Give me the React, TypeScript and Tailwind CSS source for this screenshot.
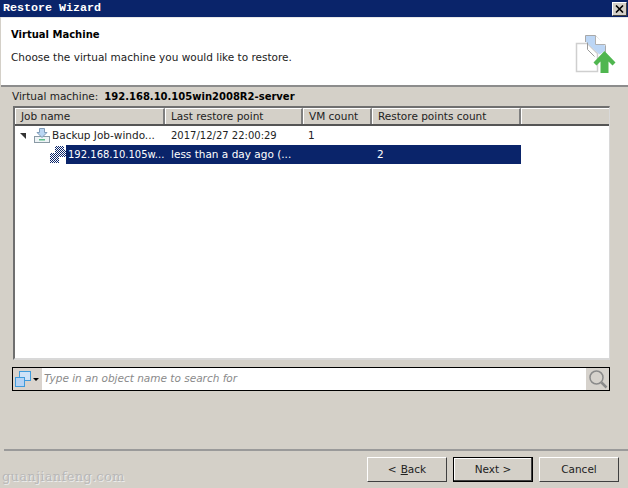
import React from "react"

const columns = [
    { label: "Job name", width: "w-[150px]" },
    { label: "Last restore point", width: "w-[138px]" },
    { label: "VM count", width: "w-[69px]" },
    { label: "Restore points count", width: "w-[149px]" },
]

const uiFont = "font-['DejaVu_Sans',sans-serif]"

const JobIcon = () => (
    <svg width="17" height="16" viewBox="0 0 17 16" className="shrink-0">
        <rect x="0.5" y="8.5" width="15" height="6" fill="#eef3f6" stroke="#8a9aa5" />
        <rect x="5" y="11" width="6" height="1.5" fill="#5cc08a" />
        <path d="M5.5 0.5h5v4h2.5l-5 5-5-5h2.5z" fill="#b9d5f2" stroke="#7f9cb8" />
    </svg>
)

const VmIcon = () => (
    <svg width="16" height="17" viewBox="0 0 16 17" className="shrink-0">
        <defs>
            <pattern id="dither" width="2" height="2" patternUnits="userSpaceOnUse">
                <rect width="2" height="2" fill="#ffffff" />
                <rect width="1" height="1" fill="#0a246a" />
                <rect x="1" y="1" width="1" height="1" fill="#0a246a" />
            </pattern>
        </defs>
        <rect x="5" y="0" width="9" height="9" fill="url(#dither)" />
        <rect x="9" y="4" width="7" height="7" fill="url(#dither)" />
        <rect x="0" y="7" width="9" height="10" fill="url(#dither)" />
    </svg>
)

const WizardIcon = () => (
    <svg width="42" height="40" viewBox="0 0 42 40">
        <path d="M1.5 9.5h11l10 10v18h-21z" fill="#ffffff" stroke="#cfcfcf" strokeWidth="1.5" />
        <path d="M10.5 1.5h10l9 9 1 6-6 4-14-13z" fill="#bcd6f5" stroke="none" />
        <path d="M10.5 8V1.5h10l10 10v7" fill="none" stroke="#a8a8a8" strokeWidth="1" />
        <path d="M12.5 8.5v7l7 7" fill="none" stroke="#9a9a9a" strokeWidth="1" />
        <path d="M20.5 1.5v9h10" fill="#ffffff" stroke="#b0b0b0" strokeWidth="1" />
        <path d="M29.5 17l11 11.5-3 3-4-4V39h-8V27.500l-4 4-3-3z" fill="#4fb64f" />
    </svg>
)

const HeaderCell = ({ label, width }: { label: string, width: string }) => (
    <div className={`${width} h-full flex items-center pl-[5px] border-t border-l border-t-white border-l-white border-r-2 border-r-[#7f7f7f] text-[10.5px] text-[#222]`}>
        {label}
    </div>
)

const WizardButton = ({ children, primary }: { children: React.ReactNode, primary?: boolean }) => (
    <button className={`w-[80px] h-[25px] flex items-center justify-center text-[10.5px] text-[#222] bg-[#d4d0c8] border ${primary ? "border-black shadow-[inset_-1px_-1px_0_#404040,inset_1px_1px_0_#ffffff]" : "border-t-white border-l-white border-r-[#404040] border-b-[#404040]"}`}>
        {children}
    </button>
)

export default function App() {
    return (
        <main className={`relative w-[628px] h-[488px] overflow-hidden bg-[#d4d0c8] flex flex-col ${uiFont}`}>
            <div className="h-[17px] bg-[#0a246a] flex items-center justify-between pl-[3px] pr-[1px]">
                <span className="font-['Liberation_Mono',monospace] font-bold text-[11.67px] leading-none text-white">Restore Wizard</span>
                <button className="w-[15px] h-[14px] flex items-center justify-center bg-[#d4d0c8] border border-t-white border-l-white border-r-[#404040] border-b-[#404040]">
                    <svg width="9" height="8" viewBox="0 0 9 8">
                        <path d="M1 0.500l7 7M8 0.500l-7 7" stroke="#000" strokeWidth="1.600" />
                    </svg>
                </button>
            </div>

            <div className="h-[70px] bg-white border-t border-[#e8e8e8] border-b-2 border-b-[#8c8c8c] flex justify-between pl-[10px] pr-[11px] ml-px">
                <div>
                    <h1 className="mt-[10px] text-[10px] leading-[14px] font-bold text-black">Virtual Machine</h1>
                    <p className="mt-[8px] text-[10.5px] leading-[14px] text-[#222]">Choose the virtual machine you would like to restore.</p>
                </div>
                <div className="mt-[16px]"><WizardIcon /></div>
            </div>

            <div className="h-[19px] pl-[12px] flex items-center gap-[6px] text-[10.5px] text-[#222]">
                <span>Virtual machine:</span>
                <span className="text-[10px] font-bold text-black">192.168.10.105win2008R2-server</span>
            </div>

            <section className="ml-[13px] w-[597px] h-[254px] bg-white border-t-2 border-l-2 border-[#6f6f6f] border-r border-r-[#d8d8d8] border-b-2 border-b-[#d8d8d8] flex flex-col">
                <div className="h-[16px] shrink-0 bg-[#d4d0c8] border-b-2 border-[#555] flex box-content">
                    {columns.map((col) => <HeaderCell key={col.label} label={col.label} width={col.width} />)}
                    <div className="flex-1 border-t border-l border-white" />
                </div>
                <div className="h-[19px] flex items-center text-[10.5px] text-[#222]">
                    <div className="w-[150px] flex items-center">
                        <span className="ml-[5px] w-0 h-0 border-l-[6px] border-t-[6px] border-l-transparent border-t-[#333]" />
                        <span className="ml-[8px]"><JobIcon /></span>
                        <span className="ml-px whitespace-nowrap">Backup Job-windo...</span>
                    </div>
                    <div className="w-[138px] pl-[6px] text-[10px]">2017/12/27 22:00:29</div>
                    <div className="w-[69px] pl-[5px]">1</div>
                </div>
                <div className="h-[19px] flex items-center text-[10.5px]">
                    <div className="ml-[35px]"><VmIcon /></div>
                    <div className="w-[455px] h-[19px] bg-[#0a246a] text-white flex items-center">
                        <span className="w-[99px] pl-[2px] whitespace-nowrap text-[10px]">192.168.10.105w...</span>
                        <span className="w-[138px] pl-[6px]">less than a day ago (...</span>
                        <span className="w-[69px]" />
                        <span className="pl-[5px]">2</span>
                    </div>
                </div>
            </section>

            <div className="mt-[7px] ml-[12px] w-[598px] h-[24px] bg-white border border-black flex items-center justify-between">
                <div className="w-[29px] h-full bg-[#d9d3cd] flex items-center pl-[2px] gap-[1px] shrink-0">
                    <svg width="17" height="16" viewBox="0 0 17 16">
                        <rect x="4.500" y="0.500" width="11" height="9" fill="#cfe2f8" stroke="#3f9bdc" />
                        <rect x="0.500" y="6.500" width="9" height="9" fill="#b5d3f5" stroke="#3f9bdc" />
                    </svg>
                    <span className="w-0 h-0 border-l-[3px] border-r-[3px] border-t-[3px] border-l-transparent border-r-transparent border-t-black" />
                </div>
                <span className="flex-1 pl-[2px] italic text-[10.5px] text-[#8a8a8a]">Type in an object name to search for</span>
                <div className="w-[23px] h-full bg-[#d6d2cc] flex items-center justify-center shrink-0">
                    <svg width="20" height="20" viewBox="0 0 20 20" fill="none" stroke="#8a8a8a">
                        <circle cx="8.500" cy="8.500" r="6.500" strokeWidth="1.500" />
                        <path d="M13.500 13.500l5 5" strokeWidth="2.500" />
                    </svg>
                </div>
            </div>

            <div className="mt-[58px] ml-[4px] border-t-2 border-[#9a9a9a]" />

            <footer className="mt-[6px] pr-[9px] flex justify-end gap-[6px]">
                <WizardButton>&lt; <span className="underline ml-1">B</span>ack</WizardButton>
                <WizardButton primary>Next &gt;</WizardButton>
                <WizardButton>Cancel</WizardButton>
            </footer>

            <span className="absolute left-[2px] top-[467px] font-['DejaVu_Serif',serif] text-[13px] tracking-[0.3px] text-[#b8b8b8] [text-shadow:1px_1px_0_#ececec]">guanjianfeng.com</span>
        </main>
    )
}
